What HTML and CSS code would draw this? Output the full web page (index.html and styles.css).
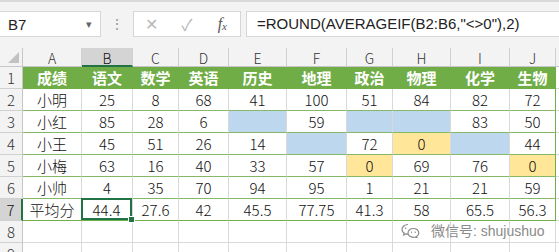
FILE: index.html
```html
<!DOCTYPE html>
<html lang="zh">
<head>
    <meta charset="UTF-8">
    <title>成绩表</title>
    <link rel="stylesheet" href="styles.css">
</head>
<body>
    <div class="formula-bar">
        <div class="name-box">
            <span>B7</span>
            <span class="drop">&#9662;</span>
        </div>
        <div class="grip">&#8942;</div>
        <div class="func-box">
            <span class="btn cancel">&#10005;</span>
            <span class="btn ok">&#10003;</span>
            <span class="fx">f<sub>x</sub></span>
        </div>
        <div class="formula">=ROUND(AVERAGEIF(B2:B6,"&lt;&gt;0"),2)</div>
    </div>

    <div class="sheet" id="sheet"></div>

    <div class="watermark">
        <svg width="19" height="15" viewBox="0 0 19 15">
            <path d="M7 1.5C3.7 1.5 1 3.7 1 6.4c0 1.5.8 2.8 2.1 3.7L2.6 12l2.2-1.2c.7.2 1.4.3 2.2.3" fill="none" stroke="#8a8a8a" stroke-width="1.2"/>
            <path d="M12.4 5.5c-3 0-5.4 2-5.4 4.4s2.4 4.4 5.4 4.4c.6 0 1.2-.1 1.8-.3l1.9 1-.5-1.6c1.3-.8 2.2-2 2.2-3.5 0-2.4-2.4-4.4-5.4-4.4z" fill="none" stroke="#8a8a8a" stroke-width="1.2"/>
            <circle cx="4.6" cy="5.2" r=".8" fill="#8a8a8a"/>
            <circle cx="10.5" cy="9.2" r=".7" fill="#8a8a8a"/>
            <circle cx="14.3" cy="9.2" r=".7" fill="#8a8a8a"/>
        </svg>
        <span>微信号: shujushuo</span>
    </div>

    <script>
        const letters = ["A", "B", "C", "D", "E", "F", "G", "H", "I", "J"];
        const rows = [
            ["成绩", "语文", "数学", "英语", "历史", "地理", "政治", "物理", "化学", "生物"],
            ["小明", "25", "8", "68", "41", "100", "51", "84", "82", "72"],
            ["小红", "85", "28", "6", "", "59", "", "", "83", "50"],
            ["小王", "45", "51", "26", "14", "", "72", "0", "", "44"],
            ["小梅", "63", "16", "40", "33", "57", "0", "69", "76", "0"],
            ["小帅", "4", "35", "70", "94", "95", "1", "21", "21", "59"],
            ["平均分", "44.4", "27.6", "42", "45.5", "77.75", "41.3", "58", "65.5", "56.3"]
        ];
        const fills = {
            E3: "blue", G3: "blue", H3: "blue",
            F4: "blue", I4: "blue", H4: "yellow",
            G5: "yellow", J5: "yellow"
        };

        function cell(cls, text) {
            return `<div class="cell ${cls}">${text}</div>`;
        }

        let html = cell("corner", '<span class="tri"></span>');
        letters.forEach(l => {
            html += cell("col-head" + (l === "B" ? " active" : ""), l);
        });
        html += cell("col-head rest", "");

        for (let r = 1; r <= 9; r++) {
            html += cell("row-head" + (r === 7 ? " active" : ""), r);
            letters.forEach((l, i) => {
                let cls = "";
                let text = "";
                if (r <= 7) {
                    text = rows[r - 1][i];
                    cls = r === 1 ? "head" : "tbl";
                    if (r === 7) cls += " last";
                    if (l === "J") cls += " right";
                    if (fills[l + r]) cls += " " + fills[l + r];
                    if (l + r === "B7") cls += " selected";
                }
                html += cell(cls, text);
            });
            html += cell("rest", "");
        }

        document.getElementById("sheet").innerHTML = html;
    </script>
</body>
</html>
```

FILE: styles.css
```css
body {
    margin: 0;
    width: 559px;
    height: 252px;
    overflow: hidden;
    background-color: #fff;
    font-family: "Liberation Sans", "Noto Sans CJK SC", sans-serif;
    position: relative;
}
.formula-bar {
    display: flex;
    align-items: center;
    height: 48px;
    padding-bottom: 2px;
    box-sizing: border-box;
    background-color: #f3f3f3;
    border-top: 2px solid #dadada;
}
.name-box {
    display: flex;
    justify-content: space-between;
    align-items: center;
    width: 101px;
    height: 26px;
    box-sizing: border-box;
    padding: 0 8px;
    background-color: white;
    border: 1px solid #d6d6d6;
    border-left: none;
    font-size: 15px;
    color: #222;
}
.drop {
    font-size: 11px;
    color: #666;
}
.grip {
    width: 32px;
    text-align: center;
    color: #9a9a9a;
    font-size: 14px;
}
.func-box {
    display: flex;
    align-items: center;
    width: 108px;
    height: 26px;
    box-sizing: border-box;
    background-color: white;
    border: 1px solid #d6d6d6;
}
.btn {
    width: 36px;
    text-align: center;
    color: #b8b8b8;
    font-size: 16px;
}
.fx {
    width: 36px;
    text-align: center;
    font-family: "Liberation Serif", serif;
    font-style: italic;
    font-size: 16px;
    color: #555;
}
.fx sub {
    font-size: 11px;
    vertical-align: -1px;
}
.formula {
    flex: 1;
    height: 26px;
    line-height: 24px;
    margin-left: 5px;
    padding-left: 10px;
    box-sizing: border-box;
    background-color: white;
    border: 1px solid #d6d6d6;
    border-right: none;
    font-size: 15px;
    color: #222;
    white-space: nowrap;
}
.sheet {
    display: grid;
    grid-template-columns: 23px 59px 51px 46px 50px 58px 60px 46px 58px 59px 46px 1fr;
    grid-template-rows: 19px repeat(9, 22px);
}
.cell {
    display: flex;
    align-items: center;
    justify-content: center;
    box-sizing: border-box;
    border-right: 1px solid #d9d9d9;
    border-bottom: 1px solid #d9d9d9;
    font-family: "Noto Sans CJK SC", sans-serif;
    font-weight: 300;
    font-size: 15px;
    color: #111;
    white-space: nowrap;
}
.corner {
    background-color: #f3f3f3;
    border-color: #c6c6c6;
    align-items: flex-end;
    justify-content: flex-end;
    padding: 0 3px 3px 0;
}
.tri {
    width: 0;
    height: 0;
    border-left: 11px solid transparent;
    border-bottom: 11px solid #c2c2c2;
}
.col-head {
    background-color: #f3f3f3;
    border-color: #d0d0d0;
    border-bottom-color: #c6c6c6;
    font-size: 14px;
    color: #333;
    padding-top: 2px;
}
.row-head {
    background-color: #f3f3f3;
    border-color: #d0d0d0;
    border-right-color: #c6c6c6;
    color: #333;
}
.col-head.active {
    background-color: #d4d4d4;
    border-bottom: 2px solid #217346;
    color: #111;
}
.row-head.active {
    background-color: #d4d4d4;
    border-right: 2px solid #217346;
    color: #111;
}
.rest {
    border-right: none;
}
.head {
    background-color: #70ad47;
    border-right-color: #70ad47;
    border-bottom-color: #70ad47;
    color: white;
    font-weight: bold;
    font-size: 15px;
}
.tbl {
    border-bottom-color: #86b965;
}
.tbl.last {
    border-bottom-color: #70ad47;
}
.right {
    border-right: 1px solid #70ad47;
}
.blue {
    background-color: #bdd7ee;
}
.yellow {
    background-color: #ffe699;
}
.selected {
    position: relative;
    box-shadow: inset 0 0 0 2px #217346;
    margin: -1px 0 0 -1px;
}
.selected::after {
    content: "";
    position: absolute;
    right: -3px;
    bottom: -3px;
    width: 5px;
    height: 5px;
    background-color: #217346;
    border: 1px solid white;
}
.watermark {
    position: absolute;
    left: 401px;
    top: 220px;
    display: flex;
    align-items: center;
    gap: 11px;
    font-size: 14px;
    color: #8a8a8a;
    text-shadow: 0 0 2px white, 0 0 1px white;
}
```
